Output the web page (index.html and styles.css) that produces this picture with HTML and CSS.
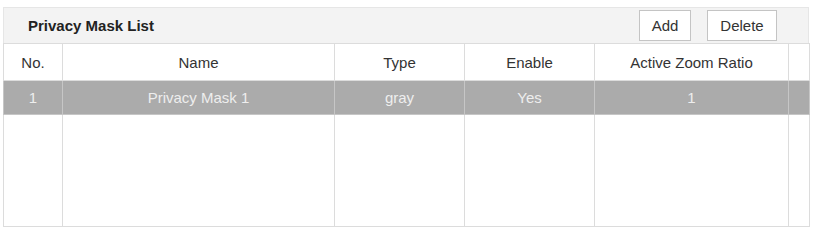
FILE: index.html
```html
<!DOCTYPE html>
<html lang="en">
<head>
  <meta charset="UTF-8">
  <meta name="viewport" content="width=device-width, initial-scale=1.0">
  <title>Privacy Mask List</title>
  <link rel="stylesheet" href="styles.css">
</head>
<body>
  <div class="panel">
    <div class="panel-header">
      <span class="panel-title">Privacy Mask List</span>
      <div class="actions">
        <button class="btn btn-add">Add</button>
        <button class="btn btn-delete">Delete</button>
      </div>
    </div>

    <table class="mask-table">
      <colgroup>
        <col class="col-no">
        <col class="col-name">
        <col class="col-type">
        <col class="col-enable">
        <col class="col-zoom">
        <col class="col-spare">
      </colgroup>
      <thead>
        <tr>
          <th>No.</th>
          <th>Name</th>
          <th>Type</th>
          <th>Enable</th>
          <th>Active Zoom Ratio</th>
          <th></th>
        </tr>
      </thead>
      <tbody>
        <tr class="selected">
          <td>1</td>
          <td>Privacy Mask 1</td>
          <td>gray</td>
          <td>Yes</td>
          <td>1</td>
          <td></td>
        </tr>
        <tr class="filler">
          <td></td>
          <td></td>
          <td></td>
          <td></td>
          <td></td>
          <td></td>
        </tr>
      </tbody>
    </table>
  </div>
</body>
</html>
```

FILE: styles.css
```css
:root {
  --line: #dcdcdc;
  --text: #333333;
  --header-bg: #f3f3f3;
  --selected-bg: #ababab;
  --selected-text: #eeeeee;
}

body {
  margin: 0;
  background: #ffffff;
  font-family: "Liberation Sans", Arial, sans-serif;
  color: var(--text);
}

.panel {
  width: 806px;
  margin: 7px 0 0 3px;
}

/* Title bar */
.panel-header {
  height: 36px;
  box-sizing: border-box;
  background: var(--header-bg);
  border: 1px solid #e6e6e6;
  border-bottom: none;
  display: flex;
  align-items: center;
  justify-content: space-between;
  padding: 0 31px 0 24px;
}

.panel-title {
  font-size: 15px;
  font-weight: bold;
  color: #222222;
}

.actions {
  display: flex;
  gap: 16px;
  align-self: flex-start;
  margin-top: 2px;
}

.btn {
  height: 31px;
  background: #ffffff;
  border: 1px solid #c4c4c4;
  border-radius: 0;
  font-family: "Liberation Sans", Arial, sans-serif;
  font-size: 15px;
  color: var(--text);
  padding: 0;
  cursor: pointer;
}

.btn-add {
  width: 52px;
}

.btn-delete {
  width: 70px;
}

/* Table */
.mask-table {
  width: 806px;
  border-collapse: collapse;
  table-layout: fixed;
  font-size: 15px;
}

.col-no { width: 59px; }
.col-name { width: 272px; }
.col-type { width: 130px; }
.col-enable { width: 130px; }
.col-zoom { width: 194px; }
.col-spare { width: 21px; }

.mask-table th,
.mask-table td {
  border: 1px solid var(--line);
  text-align: center;
  vertical-align: middle;
  padding: 0;
}

.mask-table th {
  height: 36px;
  font-weight: normal;
  background: #ffffff;
}

.mask-table .selected td {
  height: 33px;
  background: var(--selected-bg);
  color: var(--selected-text);
  border-color: #c6c6c6;
}

.mask-table .filler td {
  height: 111px;
}
```
